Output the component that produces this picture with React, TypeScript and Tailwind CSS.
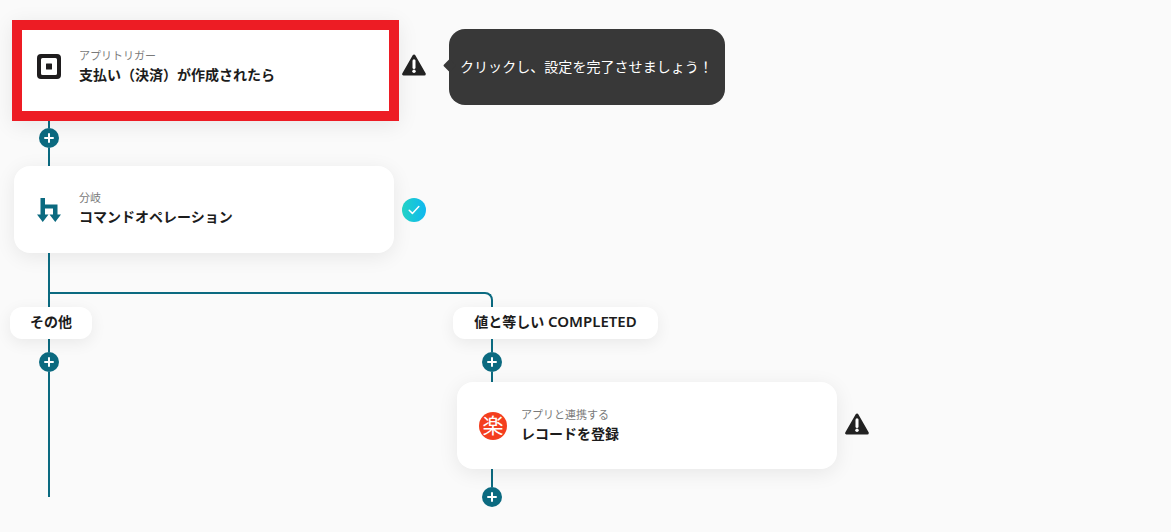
import type { ReactNode } from "react"

const FONT = "font-['Noto_Sans','Noto_Sans_CJK_JP',sans-serif]"

function VLine({ height, className = "" }: { height: string; className?: string }) {
  return <div className={`w-[2px] bg-[#0b6a80] ${height} ${className}`} />
}

function PlusButton({ className = "" }: { className?: string }) {
  return (
    <div className={`flex h-[20px] w-[20px] items-center justify-center rounded-full bg-[#0b6a80] ${className}`}>
      <svg width="10" height="10" viewBox="0 0 10 10">
        <path d="M5 1v8M1 5h8" stroke="#fff" strokeWidth="2" strokeLinecap="round" />
      </svg>
    </div>
  )
}

function WarningIcon() {
  return (
    <svg width="24" height="22" viewBox="0 0 24 22" className="shrink-0">
      <path d="M12 2 1.700 20h20.600Z" fill="#222" stroke="#222" strokeWidth="3" strokeLinejoin="round" />
      <path d="M12 6.800v6.700" stroke="#fff" strokeWidth="3" strokeLinecap="round" />
      <circle cx="12" cy="17.300" r="1.700" fill="#fff" />
    </svg>
  )
}

function CheckIcon() {
  return (
    <div className="flex h-[24px] w-[24px] shrink-0 items-center justify-center rounded-full bg-gradient-to-r from-[#24d2c4] to-[#12b7f0]">
      <svg width="12" height="10" viewBox="0 0 12 10">
        <path d="M1.200 5.200 4.400 8.400 10.800 1.600" fill="none" stroke="#fff" strokeWidth="1.500" strokeLinecap="round" strokeLinejoin="round" />
      </svg>
    </div>
  )
}

function SquareLogo() {
  return (
    <svg width="24" height="25" viewBox="0 0 24 25" className="shrink-0">
      <path
        fillRule="evenodd"
        d="M4 0h16a4 4 0 0 1 4 4v17a4 4 0 0 1-4 4H4a4 4 0 0 1-4-4V4a4 4 0 0 1 4-4Zm1.500 4A1.500 1.500 0 0 0 4 5.500v14A1.500 1.500 0 0 0 5.500 21h13a1.500 1.500 0 0 0 1.500-1.500v-14A1.500 1.500 0 0 0 18.500 4Z"
        fill="#1f1d1e"
      />
      <rect x="9" y="9.500" width="6" height="6" rx="0.500" fill="#1f1d1e" />
    </svg>
  )
}

function BranchLogo() {
  return (
    <svg width="24" height="25" viewBox="0 0 24 25" className="shrink-0">
      <path d="M3.500 1h4.500v6.500h12.500v11h-4.500v-7H8v7H3.500Z" fill="#0b6a80" />
      <path d="M0 17.500h11.500l-5.750 7.500ZM12.500 17.500h11.500l-5.750 7.500Z" fill="#0b6a80" />
    </svg>
  )
}

function RakutenLogo() {
  return (
    <div className="flex h-[28px] w-[28px] shrink-0 items-center justify-center rounded-full bg-[#f43e1e] text-[21px] leading-none text-white">
      楽
    </div>
  )
}

function StepText({ label, title }: { label: string; title: string }) {
  return (
    <div className="flex flex-col">
      <span className="text-[11px] leading-[16px] text-[#7a7a7a]">{label}</span>
      <span className="mt-[1px] text-[14px] font-semibold leading-[20px] text-[#1c1c1c]">{title}</span>
    </div>
  )
}

function Card({ icon, label, title, className = "" }: { icon: ReactNode; label: string; title: string; className?: string }) {
  return (
    <div
      className={`flex h-[87px] w-[380px] shrink-0 items-center rounded-[16px] bg-white shadow-[0_4px_20px_rgba(0,0,0,0.08)] ${className}`}
    >
      {icon}
      <StepText label={label} title={title} />
    </div>
  )
}

function BranchLabel({ children, className = "" }: { children: ReactNode; className?: string }) {
  return (
    <div
      className={`flex h-[32px] shrink-0 items-center justify-center whitespace-pre rounded-[12px] bg-white pb-[3px] text-[14px] font-semibold text-[#1c1c1c] shadow-[0_4px_16px_rgba(0,0,0,0.07)] ${className}`}
    >
      {children}
    </div>
  )
}

export default function App() {
  return (
    <div className={`h-[532px] overflow-hidden bg-[#fafafa] pt-[20px] ${FONT}`}>
      {/* trigger */}
      <div className="flex items-start pl-[12px]">
        <div className="flex h-[101px] w-[387px] shrink-0 items-center border-[10px] border-[#ed1c24] bg-white pb-[9px] pl-[15px] shadow-[0_4px_20px_rgba(0,0,0,0.08)]">
          <SquareLogo />
          <div className="ml-[18px]">
            <StepText label="アプリトリガー" title="支払い（決済）が作成されたら" />
          </div>
        </div>
        <div className="ml-[3px] mt-[34px]">
          <WarningIcon />
        </div>
        <div className="relative ml-[23px] mt-[9px] flex h-[76px] w-[276px] items-center rounded-[16px] bg-[#383838] pb-[2px] pl-[11px] text-[14px] tracking-[0.05px] text-white">
          <div className="absolute left-[-4px] top-[32px] h-[9px] w-[9px] rotate-45 rounded-[1px] bg-[#383838]" />
          クリックし、設定を完了させましょう！
        </div>
      </div>

      <VLine height="h-[7px]" className="ml-[48px]" />
      <PlusButton className="ml-[39px]" />
      <VLine height="h-[18px]" className="ml-[48px]" />

      {/* branch step */}
      <div className="flex items-center pl-[14px]">
        <Card
          className="pb-[2px] pl-[23px] [&>div:last-child]:ml-[18px] [&>svg]:mt-[2px]"
          icon={<BranchLogo />}
          label="分岐"
          title="コマンドオペレーション"
        />
        <div className="ml-[8px]">
          <CheckIcon />
        </div>
      </div>

      <div className="flex">
        {/* その他 */}
        <div className="w-[50px] shrink-0">
          <VLine height="h-[54px]" className="ml-[48px]" />
          <BranchLabel className="relative ml-[10px] w-[82px]">その他</BranchLabel>
          <VLine height="h-[13px]" className="ml-[48px]" />
          <PlusButton className="ml-[39px]" />
          <VLine height="h-[125px]" className="ml-[48px]" />
        </div>

        {/* 値と等しい */}
        <div>
          <div className="mt-[39px] h-[15px] w-[443px] rounded-tr-[8px] border-r-2 border-t-2 border-[#0b6a80]" />
          <BranchLabel className="ml-[403px] w-[205px]">
            値と等しい <span className="text-[15px]">COMPLETED</span>
          </BranchLabel>
          <VLine height="h-[13px]" className="ml-[441px]" />
          <PlusButton className="ml-[432px]" />
          <VLine height="h-[10px]" className="ml-[441px]" />
          <div className="ml-[407px] flex items-center">
            <Card
              className="pl-[22px] [&>div:last-child]:ml-[14px]"
              icon={<RakutenLogo />}
              label="アプリと連携する"
              title="レコードを登録"
            />
            <div className="mb-[3px] ml-[8px]">
              <WarningIcon />
            </div>
          </div>
          <VLine height="h-[18px]" className="ml-[441px]" />
          <PlusButton className="ml-[432px]" />
        </div>
      </div>
    </div>
  )
}
